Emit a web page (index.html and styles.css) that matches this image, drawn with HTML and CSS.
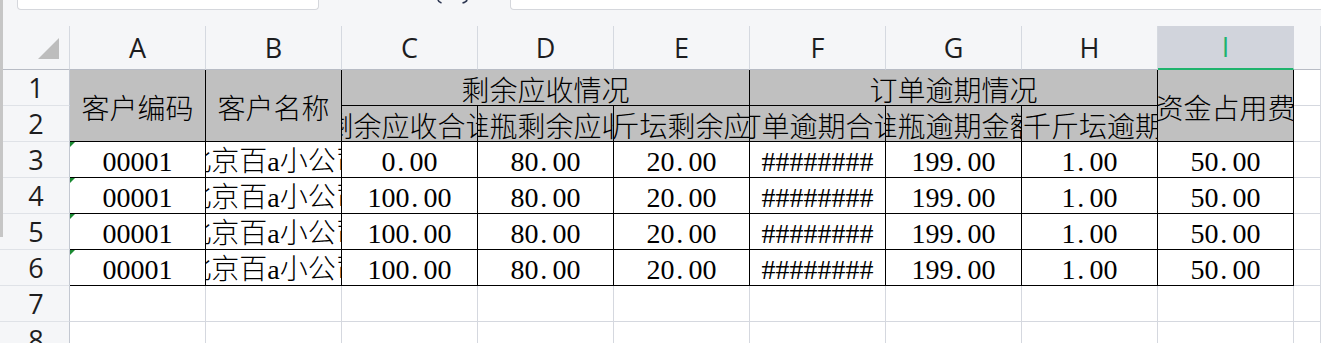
FILE: index.html
```html
<!DOCTYPE html>
<html lang="zh-CN">
<head>
<meta charset="utf-8">
<title>Sheet</title>
<link rel="stylesheet" href="styles.css">
</head>
<body>
<div class="strip"></div>
<div class="topbar">
  <div class="namebox"></div>
  <svg class="fx" width="36" height="4" viewBox="0 0 36 4"><path d="M3 0 Q3.6 2 6.5 3" fill="none" stroke="#2b3550" stroke-width="1.6"/><path d="M32 0 Q31.4 2 27.5 3" fill="none" stroke="#2b3550" stroke-width="1.6"/></svg>
  <div class="formula"></div>
</div>
<div class="sheet">
  <div class="c h corner"><svg width="21" height="21" viewBox="0 0 21 21"><polygon points="0,21 21,0 21,21" fill="#bdbdbd"/></svg></div>
  <div class="c h">A</div>
  <div class="c h">B</div>
  <div class="c h">C</div>
  <div class="c h">D</div>
  <div class="c h">E</div>
  <div class="c h">F</div>
  <div class="c h">G</div>
  <div class="c h">H</div>
  <div class="c h sel">I</div>
  <div class="c h"></div>

  <div class="c rh">1</div>
  <div class="c t g r2">客户编码</div>
  <div class="c t g r2">客户名称</div>
  <div class="c t g c3">剩余应收情况</div>
  <div class="c t g c3">订单逾期情况</div>
  <div class="c t g r2">资金占用费</div>
  <div class="c"></div>

  <div class="c rh">2</div>
  <div class="c t g">剩余应收合计</div>
  <div class="c t g">淮瓶剩余应收</div>
  <div class="c t g">千斤坛剩余应收</div>
  <div class="c t g">订单逾期合计</div>
  <div class="c t g">淮瓶逾期金额</div>
  <div class="c t g left">千斤坛逾期金额</div>
  <div class="c"></div>

  <div class="c rh">3</div>
  <div class="c t tri">00001</div>
  <div class="c t">北京百<span class="hw">a</span>小公司</div>
  <div class="c t">0<span class="dp">.</span>00</div>
  <div class="c t">80<span class="dp">.</span>00</div>
  <div class="c t">20<span class="dp">.</span>00</div>
  <div class="c t">########</div>
  <div class="c t">199<span class="dp">.</span>00</div>
  <div class="c t">1<span class="dp">.</span>00</div>
  <div class="c t">50<span class="dp">.</span>00</div>
  <div class="c"></div>

  <div class="c rh">4</div>
  <div class="c t tri">00001</div>
  <div class="c t">北京百<span class="hw">a</span>小公司</div>
  <div class="c t">100<span class="dp">.</span>00</div>
  <div class="c t">80<span class="dp">.</span>00</div>
  <div class="c t">20<span class="dp">.</span>00</div>
  <div class="c t">########</div>
  <div class="c t">199<span class="dp">.</span>00</div>
  <div class="c t">1<span class="dp">.</span>00</div>
  <div class="c t">50<span class="dp">.</span>00</div>
  <div class="c"></div>

  <div class="c rh">5</div>
  <div class="c t tri">00001</div>
  <div class="c t">北京百<span class="hw">a</span>小公司</div>
  <div class="c t">100<span class="dp">.</span>00</div>
  <div class="c t">80<span class="dp">.</span>00</div>
  <div class="c t">20<span class="dp">.</span>00</div>
  <div class="c t">########</div>
  <div class="c t">199<span class="dp">.</span>00</div>
  <div class="c t">1<span class="dp">.</span>00</div>
  <div class="c t">50<span class="dp">.</span>00</div>
  <div class="c"></div>

  <div class="c rh">6</div>
  <div class="c t tri">00001</div>
  <div class="c t">北京百<span class="hw">a</span>小公司</div>
  <div class="c t">100<span class="dp">.</span>00</div>
  <div class="c t">80<span class="dp">.</span>00</div>
  <div class="c t">20<span class="dp">.</span>00</div>
  <div class="c t">########</div>
  <div class="c t">199<span class="dp">.</span>00</div>
  <div class="c t">1<span class="dp">.</span>00</div>
  <div class="c t">50<span class="dp">.</span>00</div>
  <div class="c"></div>

  <div class="c rh">7</div>
  <div class="c"></div><div class="c"></div><div class="c"></div><div class="c"></div><div class="c"></div>
  <div class="c"></div><div class="c"></div><div class="c"></div><div class="c"></div><div class="c"></div>

  <div class="c rh">8</div>
  <div class="c"></div><div class="c"></div><div class="c"></div><div class="c"></div><div class="c"></div>
  <div class="c"></div><div class="c"></div><div class="c"></div><div class="c"></div><div class="c"></div>
</div>
</body>
</html>
```
FILE: styles.css
```css
html, body {
  margin: 0;
  padding: 0;
  background: #ffffff;
}
body {
  width: 1321px;
  height: 343px;
  overflow: hidden;
  position: relative;
}
.strip {
  position: absolute;
  left: 0;
  top: 0;
  width: 3px;
  height: 237px;
  background: #c6c6c6;
  z-index: 2;
}
.topbar {
  display: flex;
  align-items: flex-start;
  height: 26px;
  background: #f5f6f8;
}
.namebox {
  box-sizing: border-box;
  margin-left: 17px;
  width: 302px;
  height: 10px;
  background: #ffffff;
  border: 1px solid #d5d7dc;
  border-top: 0;
  border-radius: 0 0 4px 4px;
}
.fx {
  margin-left: 116px;
  display: block;
}
.formula {
  box-sizing: border-box;
  margin-left: 39px;
  margin-right: -8px;
  flex: 1;
  height: 10px;
  background: #ffffff;
  border: 1px solid #d5d7dc;
  border-top: 0;
  border-radius: 0 0 4px 4px;
}
.sheet {
  display: grid;
  grid-template-columns: 70px repeat(9, 136px) 1fr;
  grid-template-rows: 44px repeat(8, 36px);
}
.c {
  box-sizing: border-box;
  border-right: 1px solid #d5d8df;
  border-bottom: 1px solid #d5d8df;
  overflow: hidden;
  display: flex;
  align-items: center;
  justify-content: center;
  white-space: nowrap;
  padding-top: 5px;
  line-height: 28px;
  font-family: "Liberation Serif", "Noto Sans CJK SC", serif;
  font-size: 28px;
  font-weight: 300;
  color: #000000;
  position: relative;
}
.h {
  background: #f5f6f8;
  border-right-color: #d5d9e0;
  border-bottom-color: #b8bcc5;
  padding-top: 0;
  font-family: "Open Sans", sans-serif;
  font-weight: 400;
  font-size: 27px;
  color: #1d1d1f;
}
.corner {
  justify-content: flex-end;
  align-items: flex-end;
  padding: 0 10px 10px 0;
}
.corner svg {
  display: block;
}
.sel {
  background: #d1d4dc;
  color: #1fb36e;
  border-bottom: 2px solid #1fb36e;
  border-right-color: #d1d4dc;
}
.rh {
  background: #f5f6f8;
  border-right-color: #c3c8d1;
  border-bottom-color: #dfe2e7;
  padding-top: 0;
  padding-left: 3px;
  font-family: "Open Sans", sans-serif;
  font-weight: 400;
  font-size: 27px;
  color: #1d1d1f;
}
.t {
  border-right-color: #000000;
  border-bottom-color: #000000;
}
.g {
  background: #c0c0c0;
  padding-top: 9px;
}
.r2 {
  grid-row: span 2;
}
.c3 {
  grid-column: span 3;
}
.left {
  justify-content: flex-start;
  padding-left: 1px;
}
.tri::before {
  content: "";
  position: absolute;
  left: 0;
  top: 0;
  border-top: 5px solid #1a8a32;
  border-right: 5px solid transparent;
}
.dp {
  display: inline-block;
  box-sizing: border-box;
  width: 0.5em;
  padding-left: 0.06em;
  text-align: left;
}
.hw {
  display: inline-block;
  width: 0.5em;
  text-align: center;
}
```
